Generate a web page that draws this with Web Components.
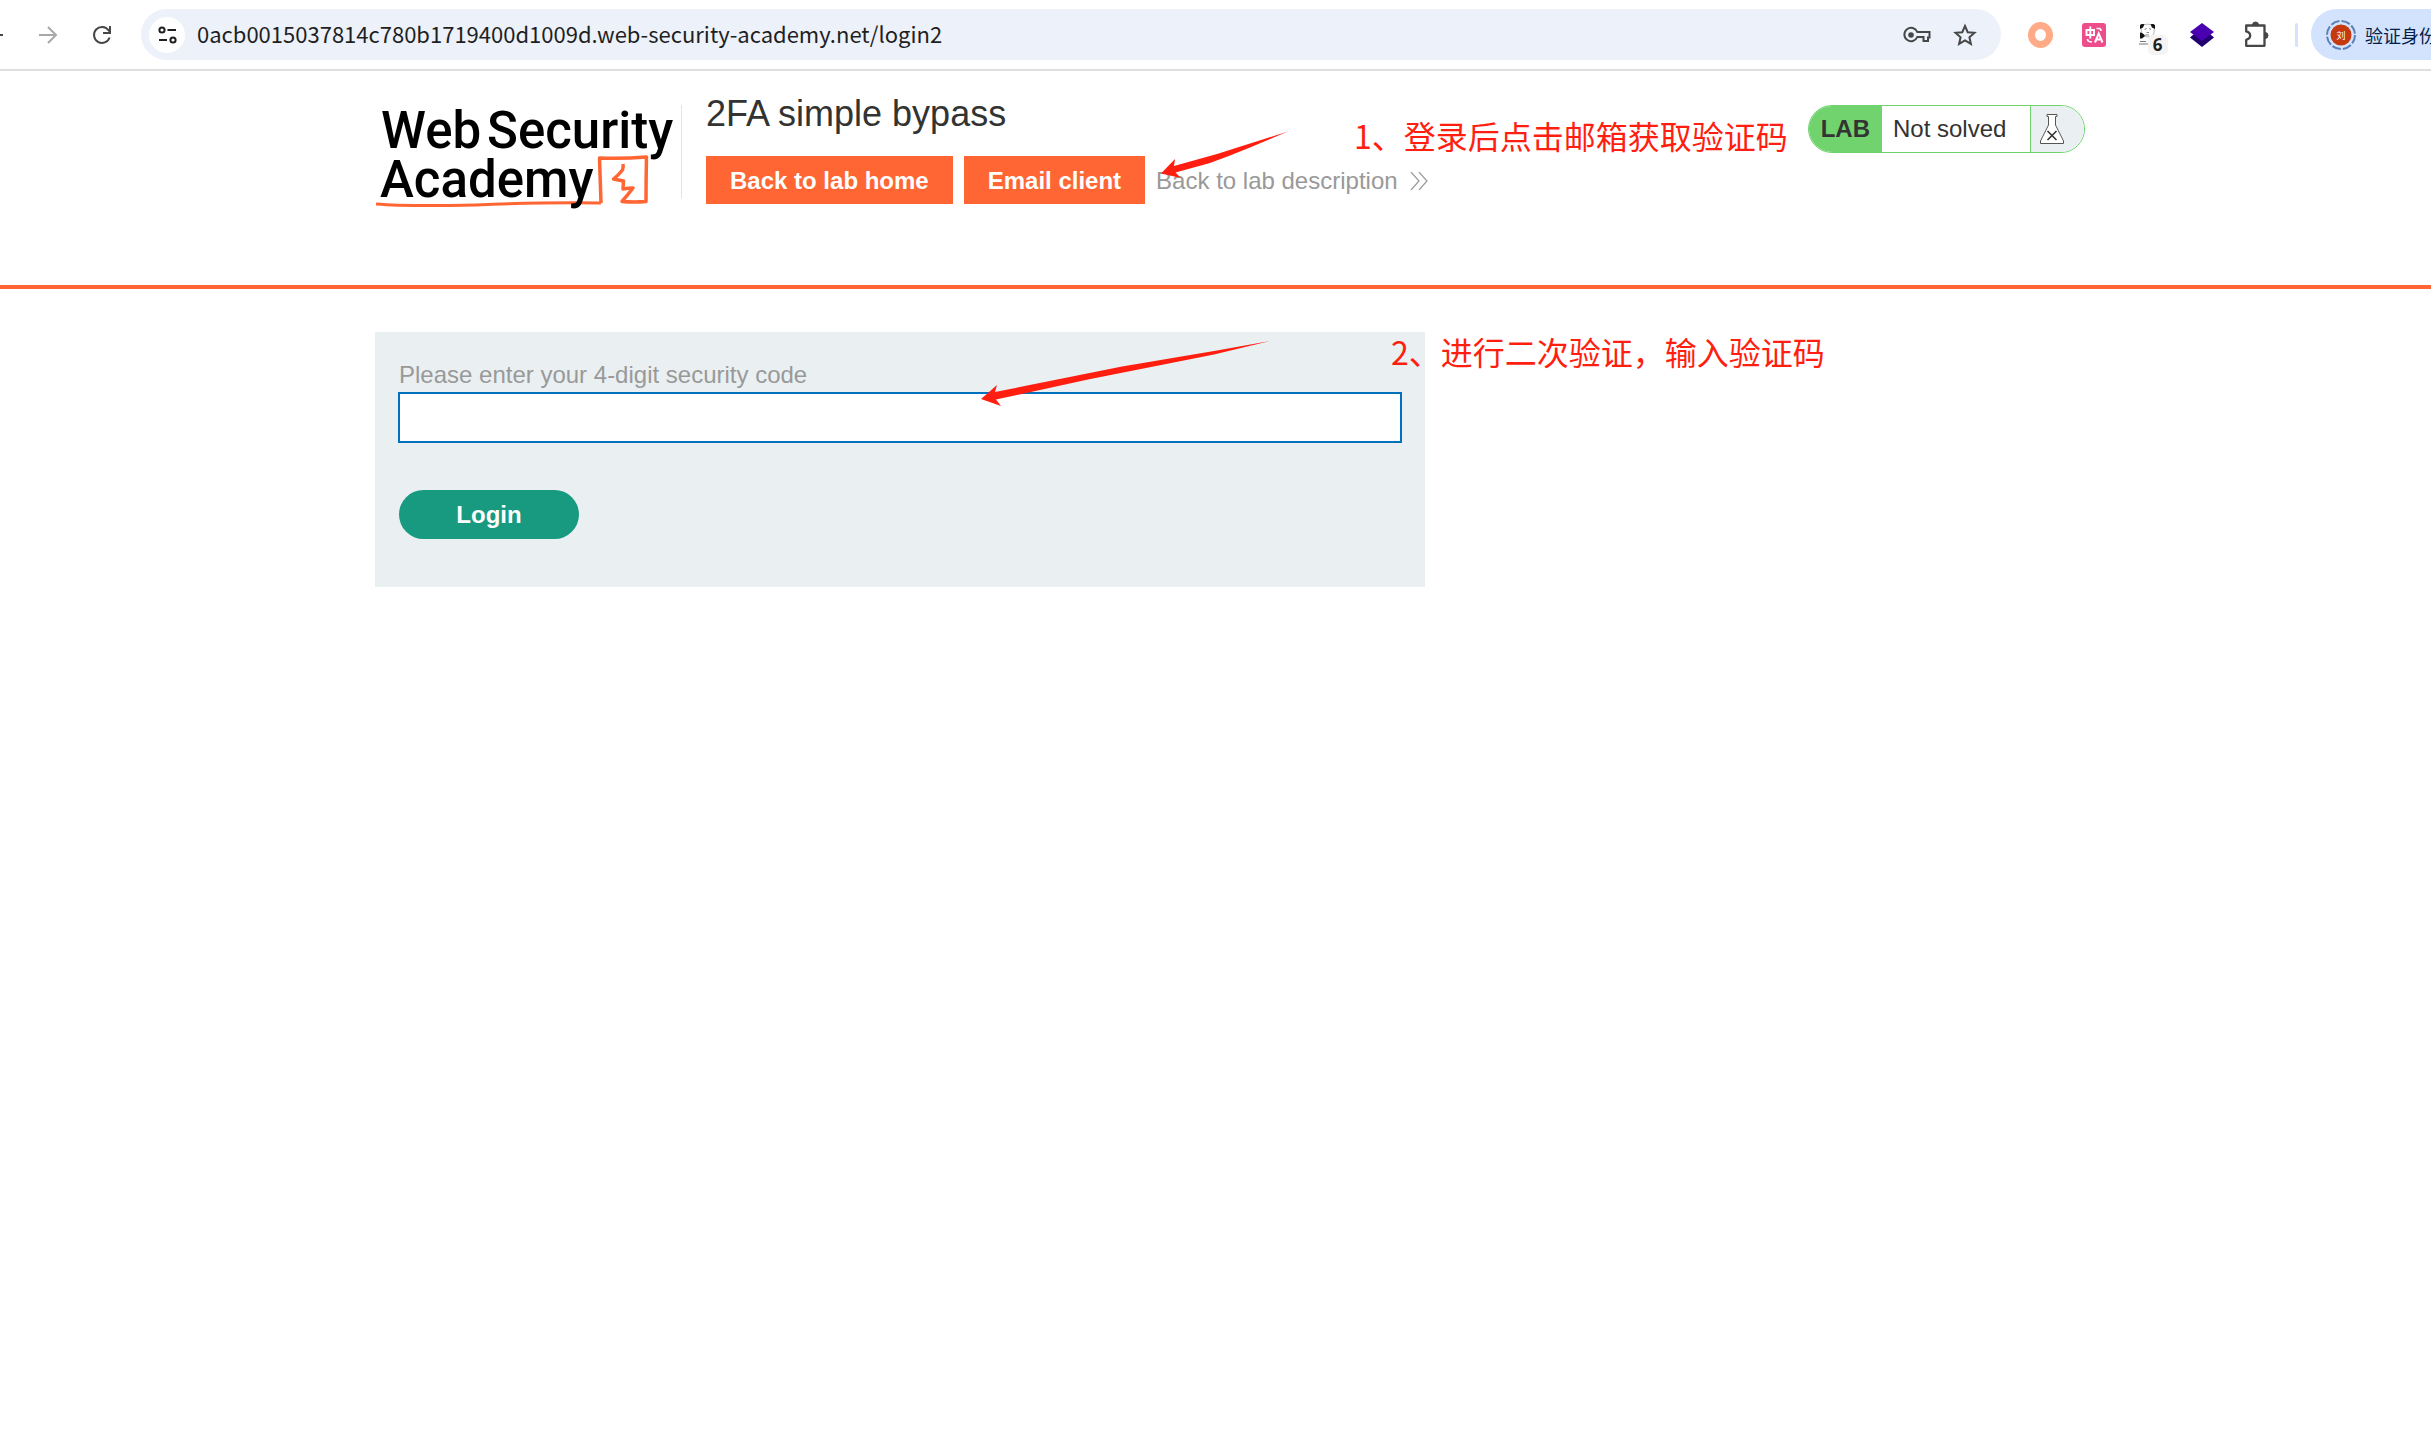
<!DOCTYPE html>
<html lang="en">
<head>
<meta charset="utf-8">
<title>2FA simple bypass</title>
<style>
  body {
    margin: 0;
    min-height: 100vh;
    position: relative;
    overflow-x: hidden;
    background: #fff;
    color: #333332;
    font-family: "Liberation Sans", Arial, "Noto Sans CJK SC", sans-serif;
    font-size: 24px;
  }
</style>
</head>
<body>
  <browser-toolbar url="0acb0015037814c780b1719400d1009d.web-security-academy.net/login2"></browser-toolbar>

  <lab-header>
    <academy-logo slot="logo"></academy-logo>
    <span slot="title">2FA simple bypass</span>
    <lab-status slot="status">Not solved</lab-status>
  </lab-header>

  <code-form label="Please enter your 4-digit security code" action-text="Login"></code-form>

  <note-layer>
    <span slot="first">1、登录后点击邮箱获取验证码</span>
    <span slot="second">2、进行二次验证，输入验证码</span>
  </note-layer>

<script>
// browser toolbar: navigation, address bar, extensions and profile
class BrowserToolbar extends HTMLElement {
  constructor() {
    super();
    this.attachShadow({ mode: 'open' });
    this.shadowRoot.innerHTML = `
      <style>
        :host {
          display: block;
          overflow: hidden;
          border-bottom: 2px solid #dfdfdf;
          font-family: "Noto Sans", "Noto Sans CJK SC", sans-serif;
        }
        .bar {
          display: flex;
          align-items: center;
          height: 69px;
          /* the back button is scrolled half out of the window */
          margin-left: -33px;
        }
        button {
          display: flex;
          align-items: center;
          justify-content: center;
          flex: none;
          width: 54px;
          height: 51px;
          padding: 0;
          border: none;
          background: none;
          font: inherit;
          color: #474747;
        }
        svg {
          display: block;
          overflow: visible;
        }
        .address {
          display: flex;
          align-items: center;
          flex: 1;
          min-width: 0;
          height: 51px;
          margin: 0 12px;
          padding: 0 12px 0 8px;
          box-sizing: border-box;
          border-radius: 26px;
          background: #ecf1fa;
        }
        .address .site {
          width: 36px;
          height: 36px;
          border-radius: 50%;
          background: #fff;
        }
        .address .action {
          width: 48px;
        }
        input {
          flex: 1;
          min-width: 0;
          padding: 0 12px 4px;
          border: none;
          outline: none;
          background: none;
          color: #1f1f1f;
          font: 22px/32px "Noto Sans CJK SC", sans-serif;
        }
        .line {
          flex: none;
          width: 3px;
          height: 24px;
          margin: 0 13px 0 12px;
          border-radius: 2px;
          background: #d3e3fd;
        }
        .profile {
          justify-content: flex-start;
          gap: 9px;
          width: 120px;
          padding-left: 15px;
          overflow: hidden;
          border-radius: 26px 0 0 26px;
          background: #d3e3fd;
          color: #041e49;
          font: 18px "Noto Sans CJK SC", sans-serif;
          white-space: nowrap;
        }
        .profile svg {
          flex: none;
        }
      </style>
      <div class="bar">
        <button aria-label="Back">
          <svg width="18" height="18" viewBox="0 0 18 18" fill="none" stroke="#474747" stroke-width="2"><path d="M18 9H1M9 1L1 9l8 8"/></svg>
        </button>
        <button aria-label="Forward">
          <svg width="18" height="18" viewBox="0 0 18 18" fill="none" stroke="#a8a8a8" stroke-width="2"><path d="M0 9h17M9 1l8 8-8 8"/></svg>
        </button>
        <button aria-label="Reload">
          <svg width="18" height="18" viewBox="0 0 18 18" fill="none" stroke="#474747" stroke-width="2"><path d="M16.600 11.500A8 8 0 1 1 15.500 4.200L17 6.200M17 0v7h-7"/></svg>
        </button>
        <div class="address">
          <button class="site" aria-label="Site information">
            <svg width="18" height="18" viewBox="0 0 18 18" fill="none" stroke="#1f1f1f" stroke-width="2"><circle cx="4" cy="4" r="2.600"/><path d="M9.500 4H18M1 14h8"/><circle cx="15" cy="14" r="2.600"/></svg>
          </button>
          <input type="text" aria-label="Address">
          <button class="action" aria-label="Passwords">
            <svg width="28" height="16" viewBox="0 0 28 16" fill="none" stroke="#474747" stroke-width="2"><path d="M14.300 5H26.500v5.500H25V14h-4.500v-4h-6.200A6.700 6.700 0 1 1 14.300 5z"/><circle cx="8" cy="8" r="2.800" fill="#474747" stroke="none"/></svg>
          </button>
          <button class="action" aria-label="Bookmark">
            <svg width="24" height="24" viewBox="0 0 24 24" fill="none" stroke="#474747" stroke-width="2"><path d="M12 3l2.700 6.200 6.800.6-5.100 4.500 1.500 6.600-5.900-3.500-5.900 3.500 1.500-6.600-5.100-4.500 6.800-.6z"/></svg>
          </button>
        </div>
        <button aria-label="Ring extension">
          <svg width="25" height="26" viewBox="0 0 25 26"><ellipse cx="12.500" cy="13" rx="9" ry="9.500" fill="none" stroke="#ffab88" stroke-width="7"/></svg>
        </button>
        <button aria-label="Translate">
          <svg width="24" height="24" viewBox="0 0 24 24"><rect width="24" height="24" rx="3" fill="#ee4d8b"/><g fill="none" stroke="#fff" stroke-width="2"><path d="M4.500 7h7.500v5H4.500zM8.300 3.500v12"/><path d="M13 19.500L16.700 10.500l3.800 9M14.500 16.500h5"/><path d="M14.500 5.500H17q2 0 2 2.500M5.500 16q0 3 4.500 3" stroke-width="1.600"/></g></svg>
        </button>
        <button aria-label="Panda extension">
          <svg width="18" height="30" viewBox="0 0 18 30">
            <path d="M2 7Q1.500 4.500 4.500 4.800 8.500 3.500 12.500 4.800q3.500-.3 3 2.200l-.5 6q-1 4-6 4t-6.500-4z" fill="#fff" stroke="#bbb" stroke-width="1"/>
            <path d="M1 9V5.500Q1.500 3.500 5.500 4.200L4 7.500zM16 9V5.500q-.5-2-4.500-1.300L13 7.500z" fill="#111"/>
            <path d="M5.500 9.500l2-1M10 8.500l2 1M7.500 12.500h2.500M6 15h4" stroke="#888" stroke-width="1"/>
            <path d="M1 12.500q3 0 5 3.500l-3 2.500H1z" fill="#111"/><path d="M1 21.500h6M0 24h9" stroke="#777" stroke-width="1"/>
            <rect x="9" y="15" width="20" height="20" rx="5" fill="#f4f4f4"/>
            <text x="18.500" y="31" font-family="Noto Sans, sans-serif" font-size="17" font-weight="700" fill="#1f1f1f" text-anchor="middle">6</text>
          </svg>
        </button>
        <button aria-label="Layers extension">
          <svg width="24" height="24" viewBox="0 0 24 24"><path d="M0 14.500L4 11h16l4 3.500L12 24z" fill="#22006e"/><path d="M12 0l12 9-12 9L0 9z" fill="#4a00b0"/></svg>
        </button>
        <button aria-label="Extensions">
          <svg width="22" height="26" viewBox="2 0 22 26" fill="none" stroke="#474747" stroke-width="2.300"><path d="M3.200 3.500h18.300v20.300H3.200v-6q4-1 4-4.200t-4-4.200z" stroke-linejoin="round"/><path d="M9.500 3a3 3 0 0 1 6 0zM22 10.500a3 3 0 0 1 0 6z" fill="#474747" stroke-width="1"/></svg>
        </button>
        <span class="line"></span>
        <button class="profile">
          <svg width="30" height="32" viewBox="0 0 30 32"><circle cx="15" cy="16" r="14" fill="none" stroke="#5b80b8" stroke-width="2" stroke-dasharray="9 2"/><circle cx="15" cy="16" r="10.500" fill="#c5390f"/><text x="15" y="20" font-family="Noto Sans CJK SC, sans-serif" font-size="9" fill="#fff" text-anchor="middle">刘</text></svg>
          <span>验证身份</span>
        </button>
      </div>
    `;
  }

  connectedCallback() {
    this.shadowRoot.querySelector('input').value = this.getAttribute('url') || '';
  }
}

class AcademyLogo extends HTMLElement {
  constructor() {
    super();
    this.attachShadow({ mode: 'open' });
    this.shadowRoot.innerHTML = `
      <style>
        :host { display: block; }
        a { display: block; }
        svg {
          display: block;
          overflow: visible;
        }
        text {
          font: 500 51px Roboto, sans-serif;
          fill: #000;
        }
      </style>
      <a href="#" aria-label="Web Security Academy">
        <svg width="306" height="110" viewBox="0 0 306 110">
          <path d="M1 99q30 2.500 100 1 70-3 125-2" fill="none" stroke="#ff6633" stroke-width="3"/>
          <path d="M226 98l-1.500-45q23 1 47-1-.5 22-.5 44.500-12 1-24 0 6-7 11-13.500-5 0-10 1l.5-8-10-2q5-4 9-9 1-3 .5-6" fill="none" stroke="#ff6633" stroke-width="3.500" stroke-linejoin="round"/>
          <text x="6" y="43">Web</text>
          <text x="112" y="43">Security</text>
          <text x="5" y="92">Academy</text>
        </svg>
      </a>
    `;
  }
}

class LabStatus extends HTMLElement {
  constructor() {
    super();
    this.attachShadow({ mode: 'open' });
    this.shadowRoot.innerHTML = `
      <style>
        :host {
          display: flex;
          height: 48px;
          box-sizing: border-box;
          overflow: hidden;
          border: 1px solid #70d36d;
          border-radius: 24px;
          line-height: 46px;
        }
        b {
          padding: 0 12px;
          background: #70d36d;
        }
        p {
          width: 148px;
          margin: 0;
          padding-left: 11px;
          box-sizing: border-box;
        }
        .flask {
          display: flex;
          align-items: center;
          width: 54px;
          padding-left: 9px;
          box-sizing: border-box;
          border-left: 1px solid #70d36d;
          background: #eaf0f2;
        }
      </style>
      <b>LAB</b>
      <p><slot></slot></p>
      <span class="flask">
        <svg width="24" height="30" viewBox="0 0 24 30"><path d="M7 .5h10v2h-1.500V11L23.500 27v2.500H.5V27L8.500 11V2.500H7z" fill="#fff" stroke="#555" stroke-width="1"/><path d="M7.500 17l9 9M16.500 17l-9 9" stroke="#333" stroke-width="1.600"/></svg>
      </span>
    `;
  }
}

class LabHeader extends HTMLElement {
  constructor() {
    super();
    this.attachShadow({ mode: 'open' });
    this.shadowRoot.innerHTML = `
      <style>
        :host {
          display: flex;
          align-items: flex-start;
          box-sizing: border-box;
          min-height: 218px;
          padding: 34px 346px 0 375px;
          border-bottom: 4px solid #ff6633;
        }
        .title {
          flex: 1;
          min-width: 0;
          margin-left: 24px;
        }
        .logo {
          flex: none;
          height: 93px;
          border-right: 1px solid #e4e4e4;
        }
        h2 {
          margin: -12px 0 0;
          font-size: 36px;
          font-weight: 400;
          line-height: 42px;
        }
        nav {
          display: flex;
          align-items: center;
          margin-top: 21px;
          line-height: 48px;
          white-space: nowrap;
        }
        a {
          height: 48px;
          box-sizing: border-box;
          padding-top: 1px;
          text-decoration: none;
        }
        .button {
          margin-right: 11px;
          padding: 1px 24px 0;
          background: #ff6633;
          color: #fff;
          font-weight: 700;
        }
        .back {
          display: flex;
          align-items: center;
          gap: 12px;
          color: #999;
        }
      </style>
      <div class="logo"><slot name="logo"></slot></div>
      <div class="title">
        <h2><slot name="title"></slot></h2>
        <nav>
          <a class="button" href="#">Back to lab home</a>
          <a class="button" href="#">Email client</a>
          <a class="back" href="#">Back to lab description
            <svg width="18" height="18" viewBox="0 0 18 18" fill="none" stroke="#999" stroke-width="1.200"><path d="M1 0l8 9-8 9M9 0l8 9-8 9"/></svg>
          </a>
        </nav>
      </div>
      <slot name="status"></slot>
    `;
  }
}

class CodeForm extends HTMLElement {
  constructor() {
    super();
    this.attachShadow({ mode: 'open' });
    this.shadowRoot.innerHTML = `
      <style>
        :host {
          display: block;
          padding: 43px 346px 0 375px;
        }
        form {
          max-width: 1050px;
          box-sizing: border-box;
          padding: 27px 23px 48px;
          background: #eaf0f2;
        }
        label {
          display: block;
          padding: 0 0 1px 1px;
          color: #999;
          line-height: 32px;
        }
        input {
          display: block;
          width: 100%;
          height: 51px;
          box-sizing: border-box;
          padding: 0 12px;
          border: 2px solid #0071bc;
          outline: none;
          background: #fff;
          font: inherit;
        }
        button {
          display: block;
          width: 180px;
          height: 49px;
          margin: 47px 0 0 1px;
          border: none;
          border-radius: 25px;
          background: #189a80;
          color: #fff;
          font: inherit;
          font-weight: 700;
        }
      </style>
      <form>
        <label for="code"></label>
        <input id="code" type="text" name="mfa-code">
        <button type="submit"></button>
      </form>
    `;
  }

  connectedCallback() {
    this.shadowRoot.querySelector('label').textContent = this.getAttribute('label');
    this.shadowRoot.querySelector('button').textContent = this.getAttribute('action-text');
    this.shadowRoot.querySelector('form').addEventListener('submit', (e) => e.preventDefault());
  }
}

// red notes and arrows that lie over the page
class NoteLayer extends HTMLElement {
  constructor() {
    super();
    this.attachShadow({ mode: 'open' });
    this.shadowRoot.innerHTML = `
      <style>
        :host {
          position: absolute;
          top: 0;
          left: 0;
          color: #ff1e10;
          font: 32px/40px "Noto Sans CJK SC", sans-serif;
          white-space: nowrap;
          pointer-events: none;
        }
        .note, svg {
          position: absolute;
        }
        .first { left: 1354px; top: 115px; }
        .second { left: 1391px; top: 331px; }
        .short { left: 1161px; top: 130px; }
        .long { left: 981px; top: 340px; }
      </style>
      <svg class="short" width="128" height="50" fill="#ff1e10"><path d="M0 43.500L14 29 13 36 56 24 89 13.500 127 1.500 89 17.500 69 25.500 49 33 14.500 42.500 20 48z"/></svg>
      <div class="note first"><slot name="first"></slot></div>
      <svg class="long" width="290" height="68" fill="#ff1e10"><path d="M0 59L16 45 14 52 141 26.500 233 11 289 1 233 14.500 107 39.500 15 59.500 20 66z"/></svg>
      <div class="note second"><slot name="second"></slot></div>
    `;
  }
}

customElements.define('browser-toolbar', BrowserToolbar);
customElements.define('academy-logo', AcademyLogo);
customElements.define('lab-status', LabStatus);
customElements.define('lab-header', LabHeader);
customElements.define('code-form', CodeForm);
customElements.define('note-layer', NoteLayer);
</script>
</body>
</html>
